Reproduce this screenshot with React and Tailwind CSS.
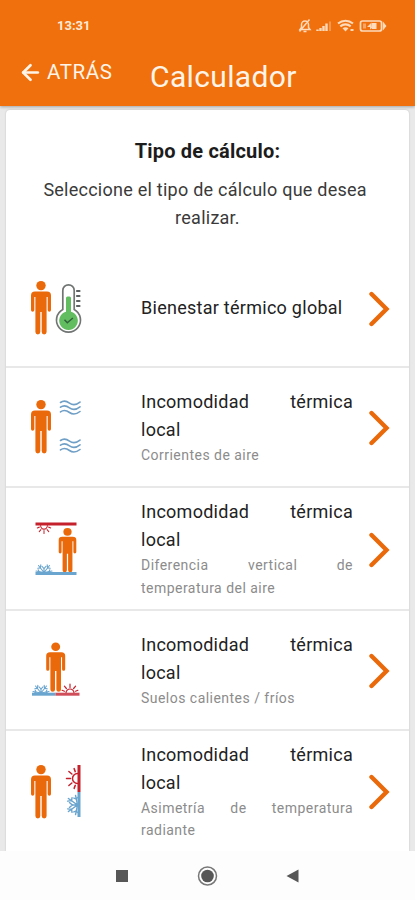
import { ArrowLeft } from 'lucide-react'

const ORANGE = '#ea6a0b'
const RED = '#c4212c'
const BLUE = '#6aa5cf'

function Person({ transform }) {
  return (
    <g transform={transform} fill={ORANGE}>
      <circle cx="10" cy="4.6" r="4.7" />
      <path d="M4 10.500h12a4 4 0 0 1 4 4V29a1.650 1.650 0 0 1-3.300 0V16h-1.100v35a2.400 2.400 0 0 1-4.900 0V31H9.300v20a2.400 2.400 0 0 1-4.900 0V16H3.300v13A1.650 1.650 0 0 1 0 29V14.500a4 4 0 0 1 4-4z" />
    </g>
  )
}

// Half sun that sits on a hot or cold surface
function HalfSun({ transform, color }) {
  return (
    <g transform={transform} stroke={color} fill="none" strokeWidth="1.2" strokeLinecap="round">
      <path d="M-4 0a4 4 0 0 1 8 0" />
      <path d="M0-5.600v-3.200M-3.600-4.500l-2-2.400M3.600-4.500l2-2.400M-5.500-1.800l-2.400-.9M5.500-1.800l2.400-.9" />
    </g>
  )
}

// Half snowflake, the cold counterpart of the sun
function HalfFlake({ transform }) {
  return (
    <g transform={transform} stroke={BLUE} fill="none" strokeWidth="1.1" strokeLinecap="round">
      <path d="M0 0v-4M0 0l-5.500-7M0 0l5.500-7M0 0l-8-1.500M0 0l8-1.500" />
      <path d="M-6.200-4.200l2.600-.4.400-3M6.200-4.200l-2.600-.4-.4-3M-2-6.200L0-4l2-2.200M-6.200-.2l1.200-.8-.8-1.800M6.200-.2L5-1l.8-1.800" />
    </g>
  )
}

function Waves({ y }) {
  return (
    <g transform={`translate(34.5 ${y})`} fill="none" stroke="#6f9fc6" strokeWidth="1.6" strokeLinecap="round">
      {[0, 4.7, 9.4].map((dy) => (
        <path key={dy} d={`M0 ${2 + dy}c3.500-2.600 6-1.600 9 .6s6.500 2.200 10.500-1`} />
      ))}
    </g>
  )
}

function GlobalIcon() {
  return (
    <>
      <Person transform="translate(5 3)" />
      <path d="M36.800 31.500V12.500a5.700 5.700 0 0 1 11.400 0v19a12 12 0 1 1-11.400 0z" fill="#fff" stroke="#707473" strokeWidth="1.700" />
      <path d="M40 33.700V20a1.500 1.500 0 0 1 1.500-1.500h2A1.500 1.500 0 0 1 45 20v13.700a9.300 9.300 0 1 1-5 0z" fill="#62bd60" />
      <path d="M38.500 41.700l2.800 3 5.600-4.700" fill="none" stroke="#2f6439" strokeWidth="1.500" />
      <path d="M51 13h2.500M51 18h2.500M51 23h2.500M51 28h2.500" stroke="#5d6060" strokeWidth="2.200" strokeLinecap="round" />
    </>
  )
}

function DraftIcon() {
  return (
    <>
      <Person transform="translate(5 3)" />
      <Waves y={3.5} />
      <Waves y={41.5} />
    </>
  )
}

function VerticalIcon() {
  return (
    <>
      <path d="M9.500 5h41" stroke={RED} strokeWidth="3" />
      <HalfSun transform="translate(18 6.500) scale(.85 -.9)" color={RED} />
      <Person transform="translate(32.700 9) scale(.88 .83)" />
      <HalfFlake transform="translate(18 53.500)" />
      <path d="M9.500 54.500h41" stroke={BLUE} strokeWidth="2.800" />
    </>
  )
}

function FloorIcon() {
  return (
    <>
      <Person transform="translate(20.200 2.500) scale(.95 .92)" />
      <HalfFlake transform="translate(15 53)" />
      <HalfSun transform="translate(44 53)" color={RED} />
      <path d="M6 54.200h23.500" stroke={BLUE} strokeWidth="3" />
      <path d="M29.500 54.200h24" stroke="#cf4e5a" strokeWidth="3" />
    </>
  )
}

function RadiantIcon() {
  return (
    <>
      <Person transform="translate(5 4)" />
      <HalfSun transform="translate(51.500 17.500) rotate(-90) scale(1.25)" color={RED} />
      <HalfFlake transform="translate(51.500 44) rotate(-90) scale(1.2 1.3)" />
      <path d="M53 4v27" stroke={RED} strokeWidth="3" />
      <path d="M53 31v25" stroke={BLUE} strokeWidth="3" />
    </>
  )
}

const options = [
  { title: 'Bienestar térmico global', Icon: GlobalIcon, height: 'h-[119px]' },
  { title: 'Incomodidad térmica local', detail: 'Corrientes de aire', Icon: DraftIcon, height: 'h-[120px]' },
  { title: 'Incomodidad térmica local', detail: 'Diferencia vertical de temperatura del aire', Icon: VerticalIcon, height: 'h-[123px]' },
  { title: 'Incomodidad térmica local', detail: 'Suelos calientes / fríos', Icon: FloorIcon, height: 'h-[120px]' },
  { title: 'Incomodidad térmica local', detail: 'Asimetría de temperatura radiante', Icon: RadiantIcon, height: 'h-[120px]' },
]

function StatusBar() {
  return (
    <div className="flex h-[51px] items-center justify-between pl-[57px] pr-[28px] text-[13px] font-bold text-[#ffe9d6]">
      <span>13:31</span>
      <svg width="90" height="16" viewBox="0 0 90 16" fill="none" stroke="#ffdabb" strokeWidth="1.500">
        {/* muted bell */}
        <path d="M3 11.500l1.500-2V6.500a3.500 3.500 0 0 1 7 0v3l1.500 2zM6.500 13.500h3M12.500 1.500L2.500 13.500" />
        {/* signal */}
        <path d="M20.500 13v-1.500M23.500 13v-3M26.500 13V8M29.500 13V5.500" strokeWidth="2.400" />
        <path d="M33 13V3.500" strokeOpacity=".5" />
        {/* wifi */}
        <path d="M41 5.500c4.500-3.700 10.500-3.700 15 0M43.300 8.300c3-2.500 7.400-2.500 10.400 0" strokeWidth="2.200" />
        <path d="M45.500 10.300c1.800-1.500 4.200-1.500 6 0l-3 3.200z" fill="#ffdabb" stroke="none" />
        <path d="M53.500 12h3" strokeWidth="2" />
        {/* battery */}
        <rect x="63.500" y="3" width="21" height="10" rx="2" strokeWidth="1.700" />
        <path d="M86.500 5.500l2 2.500-2 2.500z" fill="#ffdabb" />
        <path d="M66 5.500h3v5h-3z" fill="#f6a664" stroke="none" />
        <path d="M74.500 4.500L70 9h3v2.500l2-1.500zM75 5h4.500v6H75z" fill="#ffdabb" stroke="none" />
      </svg>
    </div>
  )
}

function OptionRow({ title, detail, Icon, height }) {
  return (
    <li className={`flex items-center border-b-2 border-[#e8e8e8] last:border-b-0 ${height}`}>
      <svg className="ml-5 shrink-0" width="60" height="60" viewBox="0 0 60 60">
        <Icon />
      </svg>
      <div className="ml-[55px] w-[212px] shrink-0 text-justify">
        <h2 className="text-[18px] leading-7 tracking-[0.27px] text-[#222]">{title}</h2>
        {detail && <p className="text-[14px] leading-[22.500px] tracking-[0.47px] text-[#8c8c8c]">{detail}</p>}
      </div>
      <svg className="ml-[15px] mt-0.5 shrink-0" width="22" height="36" viewBox="0 0 22 36" fill="none" stroke={ORANGE} strokeWidth="4.400" strokeLinecap="round">
        <path d="M3.500 3l15 15-15 15" />
      </svg>
    </li>
  )
}

export default function App() {
  return (
    <div className="flex h-[900px] w-[415px] flex-col overflow-hidden bg-[#e9e9e9] font-[Roboto,sans-serif]">
      <header className="h-[106px] shrink-0 bg-[#ef700c] text-[#fff4e8] shadow-[0_1px_3px_rgba(0,0,0,0.3)]">
        <StatusBar />
        <div className="flex h-[52px] items-center pl-[18px]">
          <button className="-mt-2.5 flex w-[132px] items-center gap-[5px] text-[20.500px] tracking-[0.6px]">
            <ArrowLeft size={25} strokeWidth={2.6} />
            <span className="-ml-px">ATRÁS</span>
          </button>
          <h1 className="text-[30px] leading-none tracking-[0.35px]">Calculador</h1>
        </div>
      </header>

      <main className="mx-1.5 mt-1 h-[741px] shrink-0 overflow-hidden rounded-t bg-white shadow-[0_0_2px_rgba(0,0,0,0.2)]">
        <div className="h-[139px] px-4 pt-[27px] text-center text-[18px] leading-7 tracking-[0.25px]">
          <h2 className="text-[20px] font-bold leading-7 tracking-[0.2px] text-[#1c1c1c]">Tipo de cálculo:</h2>
          <p className="mt-[11px] text-[#3a3a3a]">
            Seleccione el tipo de cálculo que desea&nbsp;
            <br />
            realizar.
          </p>
        </div>
        <ul>
          {options.map((option, i) => (
            <OptionRow key={i} {...option} />
          ))}
        </ul>
      </main>

      <nav className="flex flex-1 items-center bg-[#fdfdfd] pl-[115px]">
        <svg width="185" height="22" viewBox="0 0 185 22" fill="#575757">
          <rect x="1" y="5" width="12" height="12" />
          <circle cx="92.500" cy="11" r="9" fill="none" stroke="#777" strokeWidth="1.500" />
          <circle cx="92.500" cy="11" r="6.300" />
          <path d="M183.500 4.500v13L171.500 11z" />
        </svg>
      </nav>
    </div>
  )
}
